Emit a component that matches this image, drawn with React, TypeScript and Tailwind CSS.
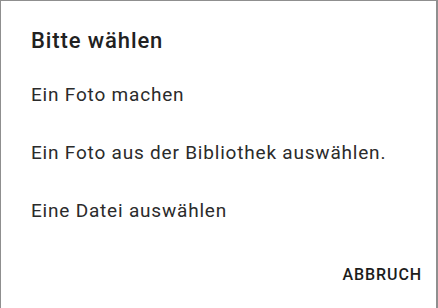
const options = [
  "Ein Foto machen",
  "Ein Foto aus der Bibliothek auswählen.",
  "Eine Datei auswählen",
];

export default function App() {
  return (
    <div className="w-[438px] h-[308px] overflow-hidden bg-[#8f8f8f] pt-px pl-px pr-[2px] font-['Roboto',sans-serif]">
      <div className="h-full bg-white flex flex-col pt-[26px]">
        {/* Title */}
        <h2 className="pl-[30px] text-[22px] leading-[28px] font-medium tracking-[0.9px] text-[#212121]">
          Bitte wählen
        </h2>

        {/* Options */}
        <ul className="mt-[11px] flex flex-col">
          {options.map((label) => (
            <li
              key={label}
              className="pl-[30px] text-[19px] leading-[58px] tracking-[0.8px] text-[#2b2b2b]"
            >
              {label}
            </li>
          ))}
        </ul>

        {/* Actions */}
        <div className="mt-[17px] flex justify-end pr-[14px]">
          <button className="text-[16px] leading-[36px] font-medium tracking-[0.9px] text-[#1c1c1c]">
            ABBRUCH
          </button>
        </div>
      </div>
    </div>
  );
}
